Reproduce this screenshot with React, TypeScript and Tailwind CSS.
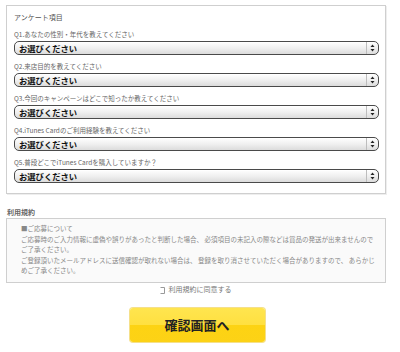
import React from "react";

const questions = [
  "Q1.あなたの性別・年代を教えてください",
  "Q2.来店目的を教えてください",
  "Q3.今回のキャンペーンはどこで知ったか教えてください",
  "Q4.iTunes Cardのご利用経験を教えてください",
  "Q5.普段どこでiTunes Cardを購入していますか？",
];

function FakeSelect() {
  return (
    <div className="relative flex h-[14px] w-[365px] items-center rounded-[5px] border border-[#4a4a4a] bg-gradient-to-b from-[#ffffff] via-[#f0f0f0] to-[#dcdcdc] shadow-[inset_0_1px_0_#fff]">
      <span className="pl-[4px] text-[8.3px] font-bold leading-none text-[#111]">お選びください</span>
      <div className="ml-auto flex h-full w-[12px] flex-col items-center justify-center border-l border-[#bdbdbd]">
        <svg width="5" height="8" viewBox="0 0 5 8">
          <path d="M2.5 0.5 L4.5 3 L0.5 3 Z" fill="#222" />
          <path d="M2.5 7.5 L4.5 5 L0.5 5 Z" fill="#222" />
        </svg>
      </div>
    </div>
  );
}

export default function App() {
  return (
    <div
      className="h-[352px] w-[400px] bg-white pt-[5px]"
      style={{ fontFamily: '"Noto Sans CJK JP", "Noto Sans", sans-serif' }}
    >
      <div className="ml-[6px] h-[189px] w-[380px] border border-[#cfcfcf] pl-[7px] pt-[6px] shadow-[1px_1px_0_#eee]">
        <div className="mb-[7px] h-[10px] text-[7px] leading-[10px] text-[#555]">アンケート項目</div>
        <div className="flex flex-col gap-[6px]">
          {questions.map((q) => (
            <div key={q} className="flex flex-col gap-[2px]">
              <div className="h-[10px] text-[6.5px] leading-[10px] text-[#666]">{q}</div>
              <FakeSelect />
            </div>
          ))}
        </div>
      </div>

      <div className="ml-[7px] mt-[13px] h-[10px] text-[7px] font-bold leading-[10px] text-[#666]">利用規約</div>
      <div className="ml-[6px] mt-[1px] h-[65px] w-[380px] border border-[#cfcfcf] bg-[#fafafa] pl-[14px] pr-[8px] pt-[4px] text-[6.5px] leading-[10.5px] text-[#888]">
        <div>■ご応募について</div>
        <div>ご応募時のご入力情報に虚偽や誤りがあったと判断した場合、 必須項目の未記入の際などは賞品の発送が出来ませんので</div>
        <div>ご了承ください。</div>
        <div>ご登録頂いたメールアドレスに送信確認が取れない場合は、 登録を取り消させていただく場合がありますので、 あらかじ</div>
        <div>めご了承ください。</div>
      </div>

      <div className="mt-[1px] flex h-[10px] items-center justify-center pr-[9px]">
        <svg width="6" height="7" viewBox="0 0 6 7" className="mr-[3px] mt-[3px]">
          <path d="M0.5 0.5 H4.5 V6.5 H0.5" fill="none" stroke="#999" strokeWidth="1" />
        </svg>
        <span className="text-[7px] leading-[10px] text-[#777]">利用規約に同意する</span>
      </div>

      <div className="mt-[14px] flex justify-center pr-[6px]">
        <div className="flex h-[34px] w-[135px] items-center justify-center overflow-hidden rounded-[3px] bg-[linear-gradient(to_bottom,#ffe54f_0%,#ffe040_50%,#fdd313_50%,#fcd216_100%)] shadow-[0_0_0_1px_#f5e08a]">
          <span className="text-[13px] font-bold text-[#222]">確認画面へ</span>
        </div>
      </div>
    </div>
  );
}
